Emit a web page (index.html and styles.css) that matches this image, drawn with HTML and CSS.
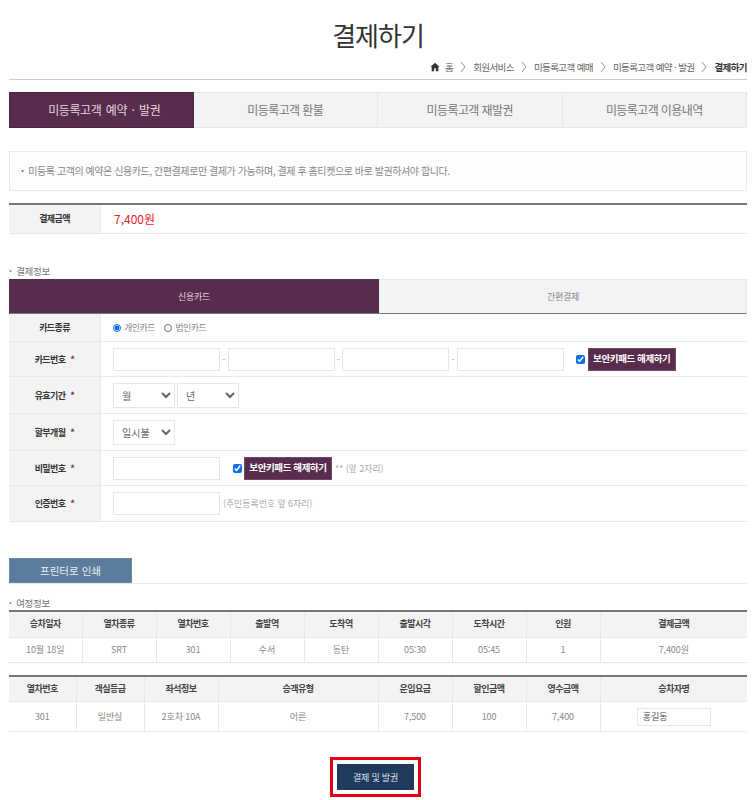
FILE: index.html
```html
<!DOCTYPE html>
<html lang="ko">
<head>
<meta charset="utf-8">
<title>결제하기</title>
<link rel="stylesheet" href="styles.css">
</head>
<body>
<div class="page">
  <h1 class="title">결제하기</h1>
  <nav class="crumbs">
    <svg class="home" viewBox="0 0 12 12" width="10" height="10"><path d="M6 1 0.5 6H2v5h3V7.5h2V11h3V6h1.500z" fill="#333"/></svg>
    <span class="crumb-first">홈</span>
    <svg class="sep" viewBox="0 0 6 12" width="6" height="12"><path d="M1 1l4 5-4 5" fill="none" stroke="#777" stroke-width=".8"/></svg>
    <span>회원서비스</span>
    <svg class="sep" viewBox="0 0 6 12" width="6" height="12"><path d="M1 1l4 5-4 5" fill="none" stroke="#777" stroke-width=".8"/></svg>
    <span>미등록고객 예매</span>
    <svg class="sep" viewBox="0 0 6 12" width="6" height="12"><path d="M1 1l4 5-4 5" fill="none" stroke="#777" stroke-width=".8"/></svg>
    <span>미등록고객 예약 · 발권</span>
    <svg class="sep" viewBox="0 0 6 12" width="6" height="12"><path d="M1 1l4 5-4 5" fill="none" stroke="#777" stroke-width=".8"/></svg>
    <strong>결제하기</strong>
  </nav>

  <ul class="tabs">
    <li class="tab active">미등록고객 예약 · 발권</li>
    <li class="tab">미등록고객 환불</li>
    <li class="tab">미등록고객 재발권</li>
    <li class="tab">미등록고객 이용내역</li>
  </ul>

  <div class="notice"><span class="dot">·</span> 미등록 고객의 예약은 신용카드, 간편결제로만 결제가 가능하며, 결제 후 홈티켓으로 바로 발권하셔야 합니다.</div>

  <div class="amount">
    <div class="amount-label">결제금액</div>
    <div class="amount-value">7,400원</div>
  </div>

  <h2 class="section pay-section"><span class="dot">·</span> 결제정보</h2>
  <div class="pay-tabs">
    <div class="pay-tab active">신용카드</div>
    <div class="pay-tab">간편결제</div>
  </div>

  <div class="form">
    <div class="row r28"><div class="label">카드종류</div><div class="field">
      <label class="radio"><input type="radio" name="ct" checked>개인카드</label>
      <label class="radio"><input type="radio" name="ct">법인카드</label>
    </div></div>
    <div class="row r35"><div class="label">카드번호 <i>*</i></div><div class="field">
      <input class="text" type="text"><span class="dash">-</span>
      <input class="text" type="text"><span class="dash">-</span>
      <input class="text" type="text"><span class="dash">-</span>
      <input class="text" type="text">
      <input class="check first-check" type="checkbox" checked>
      <button class="secure">보안키패드 해제하기</button>
    </div></div>
    <div class="row r37"><div class="label">유효기간 <i>*</i></div><div class="field selects">
      <select class="sel"><option>월</option></select>
      <select class="sel"><option>년</option></select>
    </div></div>
    <div class="row r37"><div class="label">할부개월 <i>*</i></div><div class="field">
      <select class="sel"><option>일시불</option></select>
    </div></div>
    <div class="row r35"><div class="label">비밀번호 <i>*</i></div><div class="field">
      <input class="text" type="text">
      <input class="check second-check" type="checkbox" checked>
      <button class="secure">보안키패드 해제하기</button>
      <span class="hint">** (앞 2자리)</span>
    </div></div>
    <div class="row r36"><div class="label">인증번호 <i>*</i></div><div class="field">
      <input class="text" type="text">
      <span class="hint">(주민등록번호 앞 6자리)</span>
    </div></div>
  </div>

  <div class="print-bar"><button class="print">프린터로 인쇄</button></div>

  <h2 class="section trip-section"><span class="dot">·</span> 여정정보</h2>
  <table class="grid trip">
    <colgroup><col class="c73"><col class="c74"><col class="c74"><col class="c74"><col class="c74"><col class="c74"><col class="c74"><col class="c74"><col></colgroup>
    <tr><th>승차일자</th><th>열차종류</th><th>열차번호</th><th>출발역</th><th>도착역</th><th>출발시각</th><th>도착시간</th><th>인원</th><th>결제금액</th></tr>
    <tr><td>10월 18일</td><td>SRT</td><td>301</td><td>수서</td><td>동탄</td><td>05:30</td><td>05:45</td><td>1</td><td>7,400원</td></tr>
  </table>
  <table class="grid fare">
    <colgroup><col class="c67"><col class="c68"><col class="c74"><col class="c160"><col class="c74"><col class="c74"><col class="c74"><col></colgroup>
    <tr><th>열차번호</th><th>객실등급</th><th>좌석정보</th><th>승객유형</th><th>운임요금</th><th>할인금액</th><th>영수금액</th><th>승차자명</th></tr>
    <tr><td>301</td><td>일반실</td><td>2호차 10A</td><td>어른</td><td>7,500</td><td>100</td><td>7,400</td><td><input class="name" type="text" value="홍길동"></td></tr>
  </table>

  <div class="submit-wrap"><div class="highlight"><button class="submit">결제 및 발권</button></div></div>
</div>
</body>
</html>
```
FILE: styles.css
```css
* { box-sizing: border-box; }
html, body { margin: 0; padding: 0; background: #fff; }
body { font-family: "Noto Sans CJK KR", "Noto Sans", sans-serif; color: #777; font-size: 10px; }
.page { width: 738px; margin-left: 9px; height: 800px; overflow: hidden; }
.title { margin: 0; padding-top: 15px; height: 57px; text-align: center; font-size: 26px; line-height: 40px; font-weight: 400; color: #333; letter-spacing: -1px; }
.crumbs { height: 23px; border-bottom: 1px solid #ccc; display: flex; justify-content: flex-end; align-items: center; padding-bottom: 3px; font-size: 9.5px; color: #666; line-height: 14px; letter-spacing: -0.6px; }
.crumbs strong { color: #333; font-weight: 700; }
.home { margin-right: 5px; }
.sep { margin: 0 7px; }
.tabs { list-style: none; margin: 12px 0 0; padding: 0; display: grid; grid-template-columns: repeat(4, 1fr); height: 35px; }
.tab { background: #f3f3f3; border: 1px solid #e6e6e6; border-left: 0; text-align: center; font-size: 12px; line-height: 34px; color: #777; letter-spacing: -0.6px; }
.tab.active { background: #582c4c; border: 1px solid #4d2442; color: #e4d6df; letter-spacing: -0.4px; word-spacing: 1.5px; padding-left: 6px; }
.notice { margin-top: 24px; height: 40px; border: 1px solid #eaeaea; background: #fdfdfd; padding-left: 11px; font-size: 10px; line-height: 38px; color: #888; letter-spacing: -0.43px; }
.dot { color: #e0218a; font-weight: 700; margin-right: 2px; }
.amount { margin-top: 12px; height: 31px; border-top: 2px solid #777; border-bottom: 1px solid #e8e8e8; display: flex; }
.amount-label { width: 92px; background: #f3f3f3; border-right: 1px solid #e8e8e8; text-align: center; font-size: 9px; font-weight: 700; color: #333; line-height: 28px; letter-spacing: -0.6px; }
.amount-value { padding-left: 13px; color: #e8232b; font-size: 12px; line-height: 27px; }
.section { margin: 0; font-weight: 400; font-size: 9.5px; color: #777; line-height: 14px; letter-spacing: -0.3px; }
.pay-section { margin-top: 30px; height: 15px; padding-top: 0; }
.pay-tabs { display: grid; grid-template-columns: 370px 1fr; height: 35px; }
.pay-tab { background: #f3f3f3; border: 1px solid #e6e6e6; border-bottom: 1px solid #777; text-align: center; font-size: 9px; line-height: 33px; color: #888; letter-spacing: -0.3px; }
.pay-tab.active { background: #582c4c; border-color: #582c4c; border-bottom-color: #777; color: #e4d6df; }
.row { display: flex; border-bottom: 1px solid #e8e8e8; }
.r28 { height: 28px; }
.r35 { height: 35px; }
.r36 { height: 36px; }
.r37 { height: 37px; }
.label { width: 92px; background: #f3f3f3; border-right: 1px solid #e8e8e8; display: flex; align-items: center; justify-content: center; font-size: 9px; font-weight: 700; color: #333; white-space: pre; letter-spacing: -0.6px; }
.label i { color: #582c4c; font-style: normal; margin-left: 3px; }
.field { flex: 1; display: flex; align-items: center; padding-left: 12px; color: #999; }
.radio { display: flex; align-items: center; margin-right: 9px; font-size: 9px; color: #888; letter-spacing: -0.5px; }
.radio input { width: 8px; height: 8px; margin: 0 3px 0 0; accent-color: #0a6fe8; }
.text { width: 107px; height: 23px; border: 1px solid #e6e6e6; background: #fff; padding: 0; margin: 0; }
.dash { width: 7.6px; text-align: center; font-size: 9px; color: #aaa; }
.check { width: 9px; height: 9px; margin: 0; accent-color: #0a6fe8; }
.first-check { margin-left: 12px; margin-right: 3px; }
.second-check { margin-left: 13px; margin-right: 2px; }
.secure { width: 88px; height: 23px; padding: 0; background: #582c4c; border: 1px solid #6f4a66; color: #fff; font: 700 9.5px/1 "Noto Sans CJK KR", sans-serif; white-space: nowrap; letter-spacing: -0.4px; }
.hint { margin-left: 3px; font-size: 9px; color: #aaa; letter-spacing: -0.1px; }
.sel { width: 62px; height: 25px; padding: 0 0 0 4px; border: 1px solid #e6e6e6; background: #fff; color: #666; font: 400 10px "Noto Sans CJK KR", sans-serif; margin: 0 2px 0 0; }
.print-bar { margin-top: 36px; height: 26px; border-bottom: 1px solid #e8e8e8; }
.print { display: block; width: 123px; height: 25px; padding: 0; background: #5b7d9b; border: 1px solid #668aa8; color: #e8eef3; font: 400 10.5px "Noto Sans CJK KR", sans-serif; }
.trip-section { margin-top: 12px; height: 14px; }
.grid { width: 738px; border-collapse: collapse; table-layout: fixed; border-top: 2px solid #777; border-bottom: 1px solid #e8e8e8; }
.grid th { background: #f3f3f3; font-size: 9px; font-weight: 700; color: #444; border-left: 1px solid #e8e8e8; border-bottom: 1px solid #e8e8e8; padding: 0 0 1px; height: 26px; letter-spacing: -0.5px; }
.grid td { text-align: center; font-size: 9px; color: #888; border-left: 1px solid #e8e8e8; padding: 0; letter-spacing: -0.1px; }
.grid th:first-child, .grid td:first-child { border-left: 0; }
.trip td { height: 25px; }
.fare { margin-top: 12px; }
.fare td { height: 30px; }
.c67 { width: 67px; }
.c68 { width: 68px; }
.c73 { width: 73px; }
.c74 { width: 74px; }
.c160 { width: 160px; }
.name { width: 74px; height: 18px; border: 1px solid #e6e6e6; padding: 0 0 0 5px; font: 400 9px "Noto Sans CJK KR", sans-serif; color: #555; display: block; margin: 0 auto; }
.submit-wrap { display: flex; justify-content: center; margin-top: 25px; padding-right: 5px; }
.highlight { border: 3px solid #e60012; padding: 4px; }
.submit { display: block; width: 77px; height: 26px; padding: 0; background: #1f3a5c; border: 0; color: #dfe5ec; font: 400 9px "Noto Sans CJK KR", sans-serif; letter-spacing: -0.2px; }
```
